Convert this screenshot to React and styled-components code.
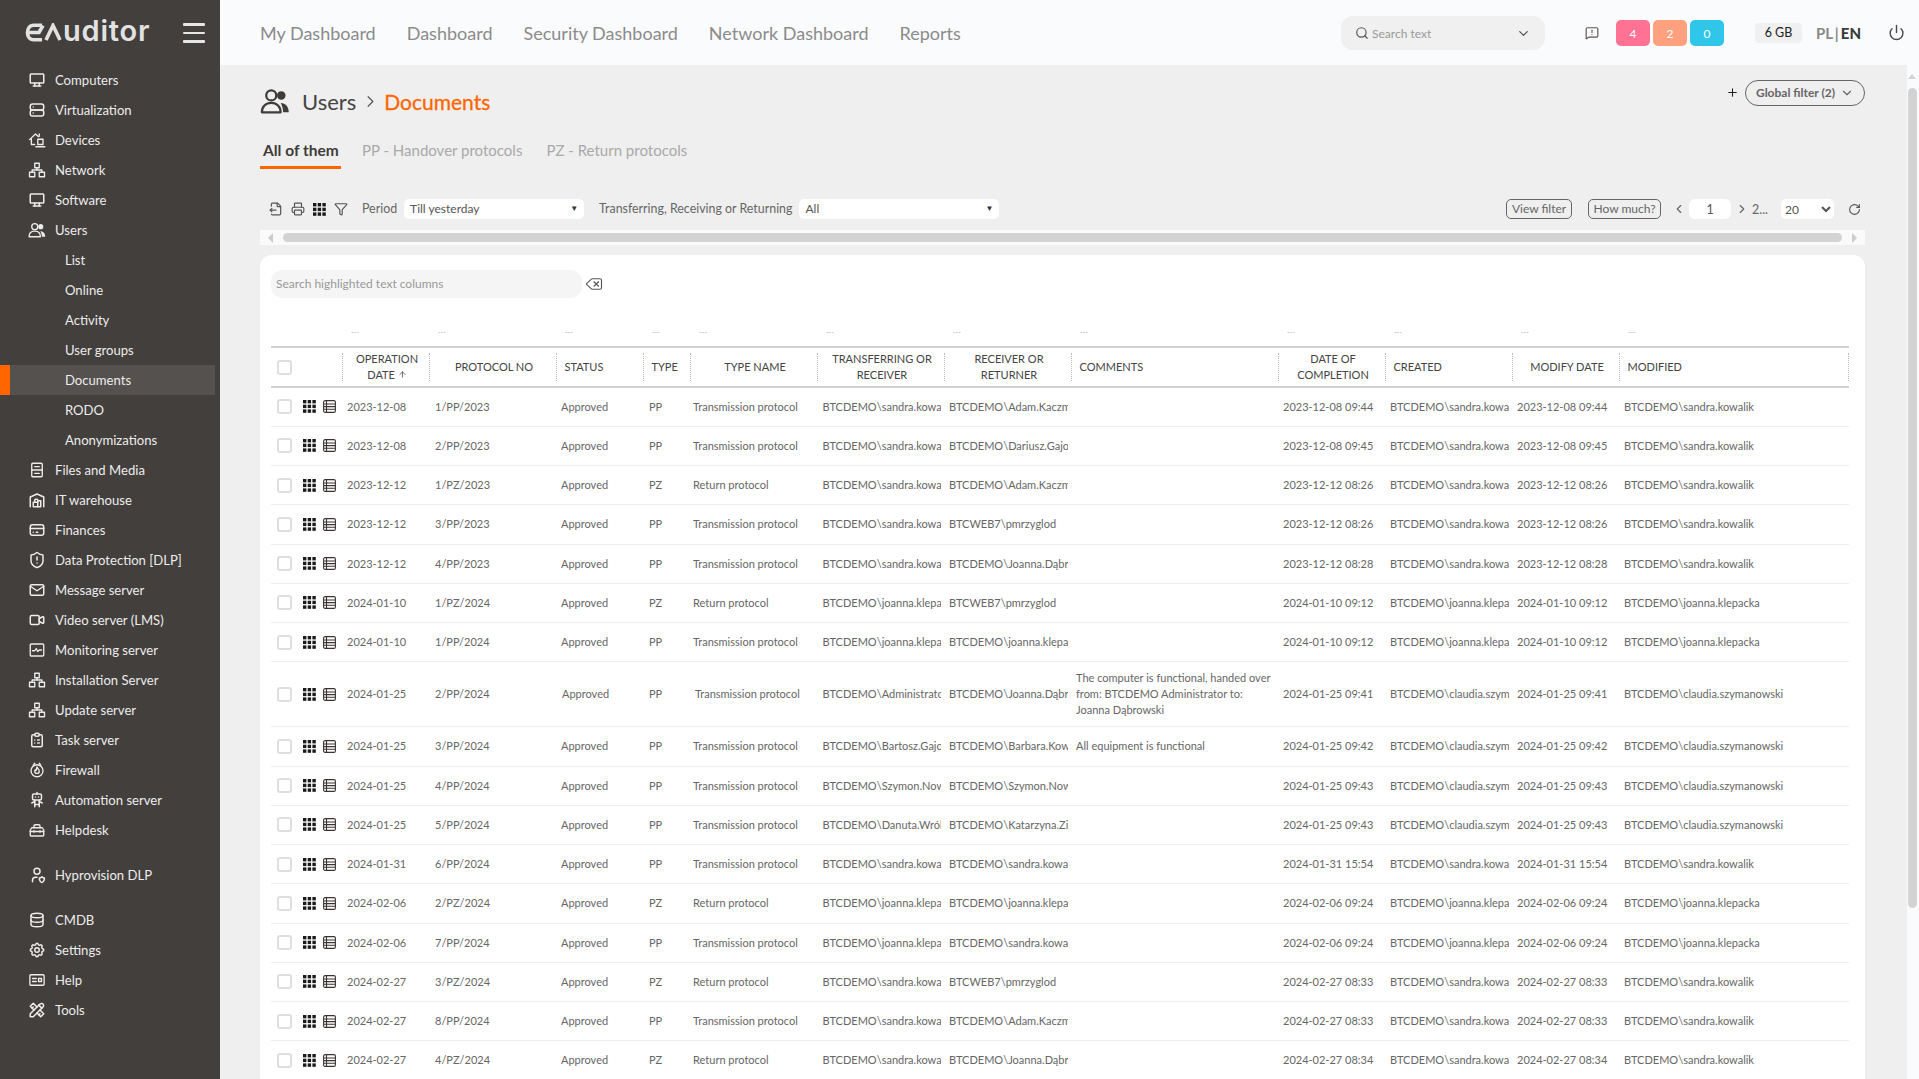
import React from 'react';
import styled, { createGlobalStyle } from 'styled-components';
import {
    ArrowUp, ChevronDown, ChevronLeft, ChevronRight, Delete, FileOutput, MessageSquareWarning,
    Plus, Power, Printer, RotateCw, Search, Funnel, ShieldAlert,
} from 'lucide-react';
import {
    TbBuildingWarehouse, TbClipboardList, TbCreditCard, TbDatabase, TbDeviceDesktop,
    TbMail, TbRobot, TbServer, TbSettings, TbTools, TbUserShield, TbVideo,
} from 'react-icons/tb';

const GlobalStyle = createGlobalStyle`
    html, body {
        margin: 0;
        height: 100%;
        overflow: hidden;
        font-family: "Lato", "Liberation Sans", sans-serif;
        background: #efefef;
    }
    * { box-sizing: border-box; }
`;

const Page = styled.div`
    display: flex;
    height: 100vh;
`;

const Sidebar = styled.aside`
    width: 220px;
    flex-shrink: 0;
    background: #433f3c;
    color: #e9e9e9;
`;

const Brand = styled.div`
    height: 65px;
    display: flex;
    align-items: flex-start;
    padding: 16px 15px 0 25px;
    justify-content: space-between;
`;

const Logo = styled.div`
    display: flex;
    align-items: flex-end;
    height: 30px;
    color: #e2e2e2;
`;

const LogoWord = styled.span`
    font-family: "Inter", sans-serif;
    font-weight: 600;
    font-size: 29px;
    line-height: 30px;
    letter-spacing: 0.8px;
    margin-left: 1px;
`;

const Burger = styled.div`
    width: 22px;
    margin-top: 7px;
    display: flex;
    flex-direction: column;
    gap: 6px;
    span {
        display: block;
        height: 2.5px;
        border-radius: 1px;
        background: #e6e6e6;
    }
`;

const NavGroup = styled.nav`
    margin-bottom: 15px;
`;

const NavItem = styled.a`
    display: flex;
    align-items: center;
    gap: 9px;
    height: 30px;
    margin-right: 5px;
    padding-left: ${p => (p.$sub ? '65px' : '28px')};
    font-size: 13.1px;
    color: #ececec;
    background: ${p => (p.$active ? '#55514e' : 'transparent')};
    box-shadow: ${p => (p.$active ? 'inset 10px 0 0 #ff6600' : 'none')};
    svg { width: 18px; height: 18px; flex-shrink: 0; }
`;

const Content = styled.div`
    flex: 1;
    min-width: 0;
    display: flex;
    flex-direction: column;
`;

const Topbar = styled.header`
    height: 65px;
    flex-shrink: 0;
    background: #fafbfd;
    display: flex;
    align-items: center;
    padding: 0 14px 0 40px;
`;

const TopNav = styled.div`
    display: flex;
    gap: 31px;
    flex: 1;
    a {
        font-size: 18px;
        color: #8b8b8b;
    }
`;

const TopSearch = styled.div`
    width: 204px;
    height: 34px;
    margin-top: 1px;
    border-radius: 12px;
    background: #f0f0f0;
    display: flex;
    align-items: center;
    padding: 0 14px;
    gap: 3px;
    font-size: 12px;
    color: #999;
    span { flex: 1; }
    svg { color: #555; }
`;

const AlertButton = styled.div`
    display: flex;
    margin: 0 17px 0 40px;
    color: #5d5450;
`;

const Badges = styled.div`
    display: flex;
    gap: 3px;
`;

const Badge = styled.div`
    width: 34px;
    height: 26px;
    margin-top: 1px;
    border-radius: 5px;
    background: ${p => p.$color};
    color: #fff;
    font-size: 12px;
    display: flex;
    align-items: center;
    justify-content: center;
`;

const MemoryBox = styled.div`
    width: 47px;
    height: 20px;
    margin-left: 31px;
    border-radius: 4px;
    background: #f0f0f0;
    color: #222;
    font-size: 12.5px;
    display: flex;
    align-items: center;
    justify-content: center;
`;

const Lang = styled.div`
    width: 44px;
    margin-left: 14px;
    font-size: 15px;
    font-weight: 700;
    word-spacing: -1.5px;
    color: #888;
    white-space: nowrap;
    b { color: #3c3c3c; }
`;

const PowerButton = styled.div`
    display: flex;
    margin-left: 28px;
    color: #4a4a4a;
`;

const Body = styled.div`
    flex: 1;
    min-height: 0;
    display: flex;
`;

const Main = styled.main`
    flex: 1;
    min-width: 0;
    overflow: hidden;
    padding: 0 42px 0 40px;
    background: #efefef;
`;

const ScrollRail = styled.div`
    width: 12px;
    flex-shrink: 0;
    padding: 9px 2px 0 1px;
    background: #fafbfd;
`;

const RailArrow = styled.div`
    width: 0;
    height: 0;
    margin: 0 0 9px 0;
    border-left: 4.5px solid transparent;
    border-right: 4.5px solid transparent;
    border-bottom: 5px solid #d3d3d3;
`;

const RailThumb = styled.div`
    height: 820px;
    border-radius: 5px;
    background: #d3d3d3;
`;

const Heading = styled.div`
    height: 67px;
    display: flex;
    align-items: center;
    justify-content: space-between;
`;

const Crumbs = styled.div`
    display: flex;
    align-items: center;
    font-size: 22px;
    color: #444;
    margin-top: 5px;
`;

const CrumbIcon = styled.div`
    display: flex;
    margin-right: 12px;
    color: #3f3b38;
`;

const CrumbCurrent = styled.span`
    color: #ff6600;
    font-size: 21px;
    -webkit-text-stroke: 0.3px #ff6600;
`;

const CrumbSep = styled.div`
    display: flex;
    margin: 0 4px 0 5px;
    color: #555;
`;

const GlobalFilter = styled.div`
    display: flex;
    align-items: center;
    gap: 6px;
    margin-top: -12px;
`;

const PillButton = styled.div`
    width: 120px;
    height: 26px;
    border: 1px solid #666;
    border-radius: 13px;
    font-size: 12px;
    font-weight: 700;
    color: #666;
    display: flex;
    align-items: center;
    justify-content: center;
    gap: 5px;
`;

const Tabs = styled.div`
    display: flex;
    gap: 18px;
    height: 37px;
    margin-bottom: 30px;
`;

const Tab = styled.div`
    font-size: ${p => (p.$active ? '15.5px' : '15px')};
    padding: 8px 3px 0;
    line-height: 20px;
    width: ${p => (p.$active ? '81px' : 'auto')};
    font-weight: ${p => (p.$active ? 700 : 400)};
    color: ${p => (p.$active ? '#403c39' : '#a9a9a9')};
    border-bottom: 3px solid ${p => (p.$active ? '#ff6600' : 'transparent')};
    white-space: nowrap;
`;

const Toolbar = styled.div`
    height: 20px;
    display: flex;
    align-items: center;
    font-size: 12.4px;
    color: #666;
`;

const ToolIcons = styled.div`
    display: flex;
    align-items: center;
    gap: 8px;
    margin: 0 14px 0 9px;
    color: #555;
`;

const ToolLabel = styled.span`
    margin-right: 7px;
    padding-bottom: 2px;
`;

const FakeSelect = styled.div`
    width: ${p => p.$width}px;
    height: 20px;
    margin-right: ${p => p.$gap || 0}px;
    padding: 0 6px 2px;
    border-radius: 5px;
    background: #fff;
    font-size: 12px;
    display: flex;
    align-items: center;
    justify-content: space-between;
    color: #555;
    i {
        font-style: normal;
        font-size: 8px;
        color: #333;
    }
`;

const Spacer = styled.div`
    flex: 1;
`;

const SmallButton = styled.div`
    width: ${p => p.$width}px;
    height: 20px;
    margin-right: ${p => p.$gap}px;
    padding-bottom: 1px;
    border: 1px solid #666;
    border-radius: 5px;
    font-size: 12px;
    color: #666;
    display: flex;
    align-items: center;
    justify-content: center;
`;

const PageInput = styled.div`
    width: 42px;
    height: 20px;
    margin: 0 4px 0 3px;
    border-radius: 6px;
    background: #fff;
    text-align: center;
    line-height: 22px;
    color: #555;
`;

const PageCount = styled.span`
    margin: 0 13px 0 3px;
`;

const PageSize = styled.select`
    width: 53px;
    height: 20px;
    border: none;
    border-radius: 5px;
    background: #fff;
    font: 12px "Lato", sans-serif;
    color: #555;
    margin-right: 14px;
`;

const RefreshIcon = styled.div`
    display: flex;
    margin-right: 4px;
    color: #555;
`;

const ScrollStrip = styled.div`
    height: 15px;
    margin: 11px 0 10px;
    padding: 0 8px;
    background: #fafafa;
    display: flex;
    align-items: center;
    gap: 10px;
`;

const StripThumb = styled.div`
    flex: 1;
    height: 9px;
    border-radius: 5px;
    background: #d3d3d3;
`;

const StripArrow = styled.div`
    width: 0;
    height: 0;
    border-top: 5px solid transparent;
    border-bottom: 5px solid transparent;
    ${p => (p.$right ? 'border-left: 5px solid #ccc;' : 'border-right: 5px solid #ccc;')}
`;

const Card = styled.section`
    border-radius: 12px;
    background: #fff;
    padding: 15px 14px 12px 11px;
`;

const SearchRow = styled.div`
    display: flex;
    align-items: center;
    gap: 3px;
    margin-bottom: 22px;
    color: #555;
`;

const HighlightSearch = styled.div`
    width: 311px;
    height: 28px;
    padding: 0 5px;
    border-radius: 12px;
    background: #f5f5f5;
    font-size: 12px;
    line-height: 28px;
    color: #999;
`;

const Table = styled.table`
    width: 1578px;
    table-layout: fixed;
    border-collapse: collapse;
    font-size: 11px;
    color: #666;
`;

const FilterCell = styled.td`
    height: 27px;
    padding: 0 0 0 8px;
    font-size: 7px;
    color: #aaa;
    line-height: 25px;
    vertical-align: top;
`;

const HeadRow = styled.tr`
    border-top: 2px solid #d0d0d0;
    border-bottom: 2px solid #d0d0d0;
`;

const Th = styled.th`
    height: 40px;
    padding: 0;
    font-weight: 400;
    font-size: 11px;
    color: #444;
    text-transform: uppercase;
`;

const ThInner = styled.div`
    height: 28px;
    padding: 0 4px 0 ${p => p.$pad ?? (p.$left ? 7.5 : 6)}px;
    border-right: 1px dotted #bbb;
    line-height: 16px;
    display: flex;
    align-items: center;
    justify-content: ${p => (p.$left ? 'flex-start' : 'center')};
    text-align: ${p => (p.$left ? 'left' : 'center')};
`;

const Row = styled.tr`
    border-bottom: 1px solid #eeeeee;
`;

const Td = styled.td`
    height: ${p => (p.$tall ? '65px' : '39.25px')};
    padding: 0 4px 0 ${p => p.$pad ?? 4}px;
    line-height: 16px;
`;

const CellText = styled.div`
    overflow: hidden;
    white-space: ${p => (p.$wrap ? 'normal' : 'nowrap')};
`;

const RowTools = styled.div`
    display: flex;
    align-items: center;
    padding-left: 6px;
`;

const Checkbox = styled.span`
    display: block;
    width: 15px;
    height: 15px;
    border: 2px solid #dedede;
    border-radius: 3px;
    background: #fff;
    margin-right: ${p => p.$gap || 0}px;
`;

const GridDots = ({ size = 13 }) => (
    <svg width={size} height={size} viewBox="0 0 13 13" fill="#1b1b1b">
        {[0, 4.7, 9.4].map(y => [0, 4.7, 9.4].map(x => <rect key={`${x}${y}`} x={x} y={y} width="3.4" height="3.4" />))}
    </svg>
);

const TableGlyph = () => (
    <svg width="13" height="13" viewBox="0 0 13 13" fill="none" stroke="#3a3330" strokeWidth="1.1" style={{ marginLeft: 7 }}>
        <rect x="0.6" y="0.6" width="11.8" height="11.8" rx="1.5" />
        <path d="M3.5 1v11M1 4h11M1 6.6h11M1 9.2h11" />
    </svg>
);

const svgProps = { viewBox: '0 0 24 24', fill: 'none', stroke: 'currentColor', strokeWidth: 1.8, strokeLinecap: 'round', strokeLinejoin: 'round' };

const UsersGlyph = ({ size }) => (
    <svg width={size} height={size} {...svgProps}>
        <circle cx="9" cy="7.5" r="4" />
        <circle cx="17" cy="7.5" r="3.4" fill="currentColor" stroke="none" />
        <path d="M1.5 21c0-4.500 3-7.500 7.500-7.500s7.500 3 7.500 7.500z" />
        <path d="M16.500 13.500c4 0 6.500 3 6.500 7.500h-4.500c0-3-.8-5.500-2-7.500z" fill="currentColor" stroke="none" />
    </svg>
);

const DevicesGlyph = () => (
    <svg {...svgProps}>
        <path d="M2 11.500 10 4l4 3.500M4.500 10v8H9" />
        <path d="M13 11h7v7h-7zM10.500 21h12" />
        <path d="M15 4v3" />
    </svg>
);

const SitemapGlyph = () => (
    <svg {...svgProps}>
        <rect x="9" y="3" width="6" height="6" />
        <rect x="2" y="15" width="7" height="6" />
        <rect x="15" y="15" width="7" height="6" />
        <path d="M12 9v3M5.500 15v-3h13v3" />
    </svg>
);

const DrawerGlyph = () => (
    <svg {...svgProps}>
        <rect x="5" y="3" width="14" height="18" rx="1.500" />
        <path d="M5 12h14M9 7.500h6M9 16.500h6" />
    </svg>
);

const PulseGlyph = () => (
    <svg {...svgProps}>
        <rect x="3" y="4" width="18" height="16" rx="1.500" />
        <path d="M6 13h3l2-3 2 4 2-2h3" />
    </svg>
);

const FlameGlyph = () => (
    <svg {...svgProps}>
        <circle cx="12" cy="13" r="8" />
        <path d="M12 8c.5 2 3 3 3 5.500a3 3 0 0 1-6 0c0-1 .5-1.500 1-2 .5 1 1 1 1.200.5.300-1 0-2.500.8-4z" />
        <path d="M7 5.500 9 3M17 5.500 15 3" />
    </svg>
);

const ToolboxGlyph = () => (
    <svg {...svgProps}>
        <path d="M3 12l2-3h14l2 3v7a1 1 0 0 1-1 1H4a1 1 0 0 1-1-1z" />
        <path d="M8 9V6.500A1.500 1.500 0 0 1 9.500 5h5A1.500 1.500 0 0 1 16 6.500V9M3 14h18M8 13v2M16 13v2" />
    </svg>
);

const HelpGlyph = () => (
    <svg {...svgProps}>
        <rect x="2.500" y="5" width="19" height="14" rx="1.500" />
        <path d="M6 10h5M6 14h5M14 10h4v4h-4z" />
    </svg>
);

// logo mark, the rest of the word stays text
const LogoMark = () => (
    <svg width="37" height="19" viewBox="0 0 37 19" fill="none" stroke="currentColor" strokeWidth="3.6" style={{ marginBottom: 4 }}>
        <path d="M17 2.200H9C4 2.200 2.500 6.500 2.500 9.500S4 16.800 9 16.800h8" />
        <path d="M2.500 9.500H14l4-7" />
        <path d="M21 17l7-14.500 7 14.500" />
    </svg>
);

const mainNav = [
    { label: 'Computers', icon: <TbDeviceDesktop /> },
    { label: 'Virtualization', icon: <TbServer /> },
    { label: 'Devices', icon: <DevicesGlyph /> },
    { label: 'Network', icon: <SitemapGlyph /> },
    { label: 'Software', icon: <TbDeviceDesktop /> },
    { label: 'Users', icon: <UsersGlyph /> },
    { label: 'List', sub: true },
    { label: 'Online', sub: true },
    { label: 'Activity', sub: true },
    { label: 'User groups', sub: true },
    { label: 'Documents', sub: true, active: true },
    { label: 'RODO', sub: true },
    { label: 'Anonymizations', sub: true },
    { label: 'Files and Media', icon: <DrawerGlyph /> },
    { label: 'IT warehouse', icon: <TbBuildingWarehouse /> },
    { label: 'Finances', icon: <TbCreditCard /> },
    { label: 'Data Protection [DLP]', icon: <ShieldAlert /> },
    { label: 'Message server', icon: <TbMail /> },
    { label: 'Video server (LMS)', icon: <TbVideo /> },
    { label: 'Monitoring server', icon: <PulseGlyph /> },
    { label: 'Installation Server', icon: <SitemapGlyph /> },
    { label: 'Update server', icon: <SitemapGlyph /> },
    { label: 'Task server', icon: <TbClipboardList /> },
    { label: 'Firewall', icon: <FlameGlyph /> },
    { label: 'Automation server', icon: <TbRobot /> },
    { label: 'Helpdesk', icon: <ToolboxGlyph /> },
];

const bottomNav = [
    { label: 'CMDB', icon: <TbDatabase /> },
    { label: 'Settings', icon: <TbSettings /> },
    { label: 'Help', icon: <HelpGlyph /> },
    { label: 'Tools', icon: <TbTools /> },
];

const columns = [
    { width: 72, key: 'tools' },
    { width: 87, label: <>Operation date <ArrowUp size={9} /></> },
    { width: 127, label: 'Protocol no' },
    { width: 87, label: 'Status', left: true },
    { width: 47, label: 'Type', left: true },
    { width: 127, label: 'Type name' },
    { width: 127, label: 'Transferring or receiver' },
    { width: 127, label: 'Receiver or returner' },
    { width: 207, label: 'Comments', left: true },
    { width: 107, label: 'Date of completion' },
    { width: 127, label: 'Created', left: true },
    { width: 107, label: 'Modify date' },
    { width: 229, label: 'Modified', left: true },
];

const SANDRA = 'BTCDEMO\\sandra.kowalik';
const JOANNA = 'BTCDEMO\\joanna.klepacka';
const CLAUDIA = 'BTCDEMO\\claudia.szymanowski';
const ADAM = 'BTCDEMO\\Adam.Kaczmarek';
const DABR = 'BTCDEMO\\Joanna.Dąbrowska';
const WEB = 'BTCWEB7\\pmrzyglod';

const rows = [
    ['2023-12-08', '1/PP/2023', SANDRA, ADAM, '', '2023-12-08 09:44', SANDRA],
    ['2023-12-08', '2/PP/2023', SANDRA, 'BTCDEMO\\Dariusz.Gajowy', '', '2023-12-08 09:45', SANDRA],
    ['2023-12-12', '1/PZ/2023', SANDRA, ADAM, '', '2023-12-12 08:26', SANDRA],
    ['2023-12-12', '3/PP/2023', SANDRA, WEB, '', '2023-12-12 08:26', SANDRA],
    ['2023-12-12', '4/PP/2023', SANDRA, DABR, '', '2023-12-12 08:28', SANDRA],
    ['2024-01-10', '1/PZ/2024', JOANNA, WEB, '', '2024-01-10 09:12', JOANNA],
    ['2024-01-10', '1/PP/2024', JOANNA, JOANNA, '', '2024-01-10 09:12', JOANNA],
    ['2024-01-25', '2/PP/2024', 'BTCDEMO\\Administrator', DABR, 'The computer is functional, handed over from: BTCDEMO Administrator to: Joanna Dąbrowski', '2024-01-25 09:41', CLAUDIA],
    ['2024-01-25', '3/PP/2024', 'BTCDEMO\\Bartosz.Gajowy', 'BTCDEMO\\Barbara.Kowalska', 'All equipment is functional', '2024-01-25 09:42', CLAUDIA],
    ['2024-01-25', '4/PP/2024', 'BTCDEMO\\Szymon.Nowak', 'BTCDEMO\\Szymon.Nowak', '', '2024-01-25 09:43', CLAUDIA],
    ['2024-01-25', '5/PP/2024', 'BTCDEMO\\Danuta.Wróbel', 'BTCDEMO\\Katarzyna.Zielińska', '', '2024-01-25 09:43', CLAUDIA],
    ['2024-01-31', '6/PP/2024', SANDRA, SANDRA, '', '2024-01-31 15:54', SANDRA],
    ['2024-02-06', '2/PZ/2024', JOANNA, JOANNA, '', '2024-02-06 09:24', JOANNA],
    ['2024-02-06', '7/PP/2024', JOANNA, SANDRA, '', '2024-02-06 09:24', JOANNA],
    ['2024-02-27', '3/PZ/2024', SANDRA, WEB, '', '2024-02-27 08:33', SANDRA],
    ['2024-02-27', '8/PP/2024', SANDRA, ADAM, '', '2024-02-27 08:33', SANDRA],
    ['2024-02-27', '4/PZ/2024', SANDRA, DABR, '', '2024-02-27 08:34', SANDRA],
];

const NavLink = ({ item }) => (
    <NavItem $sub={item.sub} $active={item.active}>
        {item.icon}
        {item.label}
    </NavItem>
);

const Cell = ({ pad, wrap, children }) => (
    <Td $pad={pad}><CellText $wrap={wrap}>{children}</CellText></Td>
);

const DocumentRow = ({ row }) => {
    const [date, number, from, to, comment, done, modifiedBy] = row;
    const isReturn = number.includes('PZ');
    const tall = comment.length > 40;
    return (
        <Row>
            <Td $pad={0} $tall={tall}>
                <RowTools>
                    <Checkbox $gap={11} />
                    <GridDots />
                    <TableGlyph />
                </RowTools>
            </Td>
            <Cell>{date}</Cell>
            <Cell pad={5}>{number}</Cell>
            <Cell pad={tall ? 5 : 4}>Approved</Cell>
            <Cell pad={5}>{isReturn ? 'PZ' : 'PP'}</Cell>
            <Cell pad={tall ? 4 : 2}>{isReturn ? 'Return protocol' : 'Transmission protocol'}</Cell>
            <Cell pad={4.5}>{from}</Cell>
            <Cell>{to}</Cell>
            <Cell wrap>{comment}</Cell>
            <Cell>{done}</Cell>
            <Cell>{modifiedBy}</Cell>
            <Cell>{done}</Cell>
            <Cell>{modifiedBy}</Cell>
        </Row>
    );
};

const App = () => (
    <Page>
        <GlobalStyle />
        <Sidebar>
            <Brand>
                <Logo>
                    <LogoMark />
                    <LogoWord>uditor</LogoWord>
                </Logo>
                <Burger><span /><span /><span /></Burger>
            </Brand>
            <NavGroup>{mainNav.map(item => <NavLink key={item.label} item={item} />)}</NavGroup>
            <NavGroup><NavLink item={{ label: 'Hyprovision DLP', icon: <TbUserShield /> }} /></NavGroup>
            <NavGroup>{bottomNav.map(item => <NavLink key={item.label} item={item} />)}</NavGroup>
        </Sidebar>
        <Content>
            <Topbar>
                <TopNav>
                    <a>My Dashboard</a>
                    <a>Dashboard</a>
                    <a>Security Dashboard</a>
                    <a>Network Dashboard</a>
                    <a>Reports</a>
                </TopNav>
                <TopSearch>
                    <Search size={14} />
                    <span>Search text</span>
                    <ChevronDown size={15} />
                </TopSearch>
                <AlertButton><MessageSquareWarning size={14} /></AlertButton>
                <Badges>
                    <Badge $color="#ff7294">4</Badge>
                    <Badge $color="#ffa07f">2</Badge>
                    <Badge $color="#2fc6ea">0</Badge>
                </Badges>
                <MemoryBox>6 GB</MemoryBox>
                <Lang>PL | <b>EN</b></Lang>
                <PowerButton><Power size={17} /></PowerButton>
            </Topbar>
            <Body>
                <Main>
                    <Heading>
                        <Crumbs>
                            <CrumbIcon><UsersGlyph size={30} /></CrumbIcon>
                            Users
                            <CrumbSep><ChevronRight size={19} strokeWidth={1.5} /></CrumbSep>
                            <CrumbCurrent>Documents</CrumbCurrent>
                        </Crumbs>
                        <GlobalFilter>
                            <Plus size={13} color="#222" />
                            <PillButton>Global filter (2) <ChevronDown size={14} /></PillButton>
                        </GlobalFilter>
                    </Heading>
                    <Tabs>
                        <Tab $active>All of them</Tab>
                        <Tab>PP - Handover protocols</Tab>
                        <Tab>PZ - Return protocols</Tab>
                    </Tabs>
                    <Toolbar>
                        <ToolIcons>
                            <FileOutput size={14} />
                            <Printer size={14} />
                            <GridDots />
                            <Funnel size={14} />
                        </ToolIcons>
                        <ToolLabel>Period</ToolLabel>
                        <FakeSelect $width={180} $gap={15}>Till yesterday <i>▼</i></FakeSelect>
                        <ToolLabel>Transferring, Receiving or Returning</ToolLabel>
                        <FakeSelect $width={200}>All <i>▼</i></FakeSelect>
                        <Spacer />
                        <SmallButton $width={66} $gap={16}>View filter</SmallButton>
                        <SmallButton $width={73} $gap={11}>How much?</SmallButton>
                        <ChevronLeft size={14} />
                        <PageInput>1</PageInput>
                        <ChevronRight size={14} />
                        <PageCount>2...</PageCount>
                        <PageSize defaultValue="20">
                            <option>20</option>
                            <option>50</option>
                            <option>100</option>
                        </PageSize>
                        <RefreshIcon><RotateCw size={13} /></RefreshIcon>
                    </Toolbar>
                    <ScrollStrip>
                        <StripArrow />
                        <StripThumb />
                        <StripArrow $right />
                    </ScrollStrip>
                    <Card>
                        <SearchRow>
                            <HighlightSearch>Search highlighted text columns</HighlightSearch>
                            <Delete size={18} strokeWidth={1.5} />
                        </SearchRow>
                        <Table>
                            <colgroup>
                                {columns.map((col, i) => <col key={i} width={col.width} />)}
                            </colgroup>
                            <thead>
                                <tr>
                                    <FilterCell />
                                    {columns.slice(1).map((col, i) => <FilterCell key={i}>---</FilterCell>)}
                                </tr>
                                <HeadRow>
                                    <Th>
                                        <ThInner $left $pad={6}><Checkbox /></ThInner>
                                    </Th>
                                    {columns.slice(1).map((col, i) => (
                                        <Th key={i}><ThInner $left={col.left}><span>{col.label}</span></ThInner></Th>
                                    ))}
                                </HeadRow>
                            </thead>
                            <tbody>
                                {rows.map(row => <DocumentRow key={row[1]} row={row} />)}
                            </tbody>
                        </Table>
                    </Card>
                </Main>
                <ScrollRail>
                    <RailArrow />
                    <RailThumb />
                </ScrollRail>
            </Body>
        </Content>
    </Page>
);

export default App;
